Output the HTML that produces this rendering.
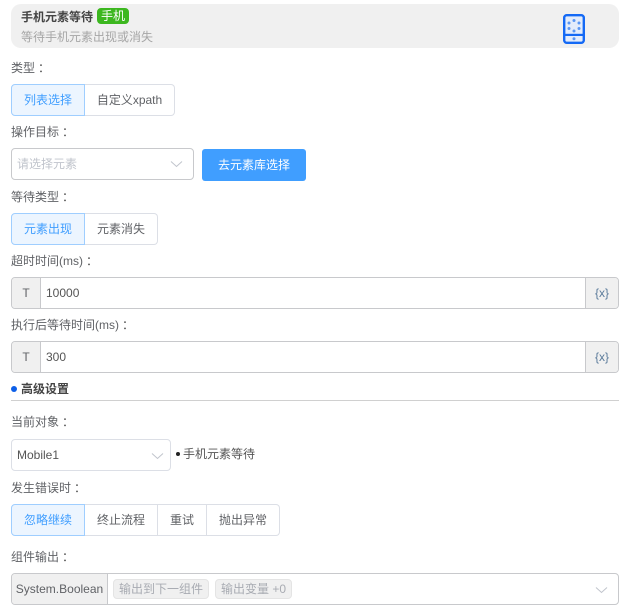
<!DOCTYPE html>
<html lang="zh">
<head>
<meta charset="utf-8">
<style>
html,body{margin:0;padding:0;background:#fff;width:630px;height:611px;overflow:hidden}
body{position:relative;font-family:"Liberation Sans","Noto Sans CJK SC",sans-serif;font-size:12px;color:#606266}
.a{position:absolute;box-sizing:border-box;white-space:nowrap}
.l{position:absolute;left:11px;height:18px;line-height:18px;color:#606266;white-space:nowrap}
.l span{position:relative;left:3px;color:#555}
.b{position:absolute;box-sizing:border-box;height:32px;line-height:30px;text-align:center;border:1px solid #dcdfe6;border-left:0;background:#fff;color:#606266;white-space:nowrap}
.b.on{border:1px solid #9fceff;background:#ecf5ff;color:#409eff;border-radius:4px 0 0 4px}
.b.e{border-radius:0 4px 4px 0}
.sel{position:absolute;box-sizing:border-box;border:1px solid #c8c9cc;border-radius:4px;background:#fff}
.inp{position:absolute;left:11px;width:608px;height:32px;box-sizing:border-box;border:1px solid #c8c9cc;border-radius:4px;background:#fff;overflow:hidden}
.inp .t{position:absolute;left:0;top:0;width:28px;height:30px;line-height:30px;text-align:center;background:#f0f0f0;border-right:1px solid #c8c9cc;color:#606266}
.inp .v{position:absolute;left:34px;top:0;line-height:30px;color:#555}
.inp .x{position:absolute;right:0;top:0;width:32px;height:30px;line-height:30px;text-align:center;background:#f0f0f0;border-left:1px solid #c8c9cc;color:#5a7a9a;font-size:12px}
.chev{position:absolute}
.tag{position:absolute;box-sizing:border-box;height:20px;line-height:18px;top:5px;background:#f0f0f0;border:1px solid #e4e4e4;border-radius:4px;color:#a8abb2;text-align:center;white-space:nowrap}
</style>
</head>
<body>
<div class="a" style="left:11px;top:4px;width:608px;height:44px;background:#f0f0f0;border-radius:10px"></div>
<div class="a" style="left:21px;top:8px;line-height:18px;font-weight:bold;color:#444">手机元素等待</div>
<div class="a" style="left:97px;top:8px;width:32px;height:16px;line-height:16px;background:#3cb71f;border-radius:4px;color:#fff;text-align:center">手机</div>
<div class="a" style="left:21px;top:28px;line-height:18px;color:#a6a6a6">等待手机元素出现或消失</div>
<svg class="a" style="left:563px;top:14px" width="22" height="30" viewBox="0 0 22 30">
<rect x="1.200" y="1.200" width="19.600" height="27.600" rx="2.500" fill="#e3ecfb" stroke="#1469f5" stroke-width="2.400"/>
<rect x="1" y="19.800" width="20" height="2.200" fill="#1469f5"/>
<circle cx="11" cy="24.800" r="1.500" fill="#5a96f3"/>
<g fill="#5a96f3"><circle cx="11" cy="6.500" r="1.500"/><circle cx="11" cy="17" r="1.500"/><circle cx="6" cy="9" r="1.500"/><circle cx="16" cy="9" r="1.500"/><circle cx="6" cy="14.500" r="1.500"/><circle cx="16" cy="14.500" r="1.500"/></g>
</svg>

<div class="l" style="top:59px">类型<span>：</span></div>
<div class="b on" style="left:11px;top:84px;width:74px">列表选择</div>
<div class="b e" style="left:85px;top:84px;width:90px">自定义xpath</div>

<div class="l" style="top:123px">操作目标<span>：</span></div>
<div class="sel" style="left:11px;top:148px;width:183px;height:32px"></div>
<div class="a" style="left:17px;top:155px;line-height:18px;color:#c0c4cc">请选择元素</div>
<svg class="chev" style="left:170px;top:160px" width="13" height="8" viewBox="0 0 13 8"><path d="M1 1.500l5.500 5 5.500-5" fill="none" stroke="#c0c4cc" stroke-width="1"/></svg>
<div class="a" style="left:202px;top:149px;width:104px;height:32px;line-height:32px;background:#409eff;color:#fff;text-align:center;border-radius:3px">去元素库选择</div>

<div class="l" style="top:188px">等待类型<span>：</span></div>
<div class="b on" style="left:11px;top:213px;width:74px">元素出现</div>
<div class="b e" style="left:85px;top:213px;width:73px">元素消失</div>

<div class="l" style="top:252px">超时时间(ms)<span>：</span></div>
<div class="inp" style="top:277px"><div class="t">T</div><div class="v">10000</div><div class="x">{x}</div></div>

<div class="l" style="top:316px">执行后等待时间(ms)<span>：</span></div>
<div class="inp" style="top:341px"><div class="t">T</div><div class="v">300</div><div class="x">{x}</div></div>

<div class="a" style="left:11px;top:386px;width:6px;height:6px;border-radius:50%;background:#0d5fe8"></div>
<div class="a" style="left:21px;top:380px;line-height:18px;font-weight:bold;color:#444">高级设置</div>
<div class="a" style="left:11px;top:400px;width:608px;height:1px;background:#d0d0d0"></div>

<div class="l" style="top:413px">当前对象<span>：</span></div>
<div class="sel" style="left:11px;top:439px;width:160px;height:32px;border-color:#dcdfe6"></div>
<div class="a" style="left:17px;top:446px;line-height:18px;color:#555">Mobile1</div>
<svg class="chev" style="left:151px;top:452px" width="13" height="8" viewBox="0 0 13 8"><path d="M1 1.500l5.500 5 5.500-5" fill="none" stroke="#c0c4cc" stroke-width="1"/></svg>
<div class="a" style="left:176px;top:452px;width:4px;height:4px;border-radius:50%;background:#222"></div>
<div class="a" style="left:183px;top:445px;line-height:18px;color:#555">手机元素等待</div>

<div class="l" style="top:479px">发生错误时<span>：</span></div>
<div class="b on" style="left:11px;top:504px;width:74px">忽略继续</div>
<div class="b" style="left:85px;top:504px;width:73px">终止流程</div>
<div class="b" style="left:158px;top:504px;width:49px">重试</div>
<div class="b e" style="left:207px;top:504px;width:73px">抛出异常</div>

<div class="l" style="top:548px">组件输出<span>：</span></div>
<div class="inp" style="top:573px">
<div class="t" style="width:95px;font-size:12px">System.Boolean</div>
<div class="tag" style="left:101px;width:96px">输出到下一组件</div>
<div class="tag" style="left:203px;width:77px">输出变量 +0</div>
</div>
<svg class="chev" style="left:595px;top:586px" width="13" height="8" viewBox="0 0 13 8"><path d="M1 1.500l5.500 5 5.500-5" fill="none" stroke="#c0c4cc" stroke-width="1"/></svg>
</body>
</html>
